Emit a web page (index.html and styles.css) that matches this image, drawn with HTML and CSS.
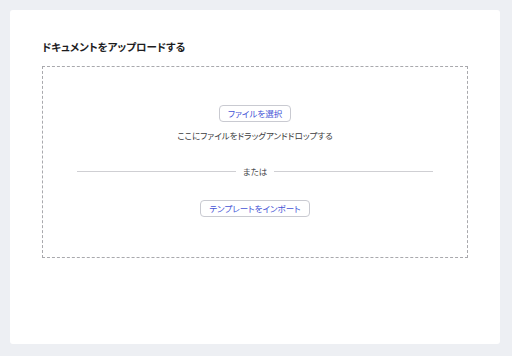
FILE: index.html
```html
<!DOCTYPE html>
<html lang="ja">
<head>
<meta charset="UTF-8">
<meta name="viewport" content="width=device-width, initial-scale=1.0">
<title>ドキュメントをアップロード</title>
<link rel="stylesheet" href="styles.css">
</head>
<body>
<div class="upload-card">
  <h2 class="upload-title">ドキュメントをアップロードする</h2>
  <div class="drop-zone">
    <button class="pick-button">ファイルを選択</button>
    <p class="drop-hint">ここにファイルをドラッグアンドドロップする</p>
    <div class="divider">
      <span class="divider-line"></span>
      <span class="divider-text">または</span>
      <span class="divider-line"></span>
    </div>
    <button class="pick-button">テンプレートをインポート</button>
  </div>
</div>
</body>
</html>
```

FILE: styles.css
```css
* {
  box-sizing: border-box;
}
body {
  font-family: "Noto Sans CJK JP", "Noto Sans", sans-serif;
  font-feature-settings: "palt";
  background-color: #edeff3;
  margin: 0;
  height: 100vh;
  padding: 10px 12px 12px 10px;
  display: flex;
}
.upload-card {
  flex: 1;
  background-color: white;
  border-radius: 3px;
  padding: 30px 32px;
}
.upload-title {
  margin: 0 0 12px;
  font-size: 10.5px;
  line-height: 14px;
  font-weight: bold;
  color: #1d1d1f;
}
.drop-zone {
  border: 1px dashed #a9a9ad;
  padding: 38px 34px 40px;
  display: flex;
  flex-direction: column;
  align-items: center;
}
.pick-button {
  font-family: inherit;
  font-feature-settings: "palt";
  font-size: 8.5px;
  line-height: 11px;
  padding: 2px 8px;
  color: #4453d6;
  background-color: white;
  border: 1px solid #c9cad1;
  border-radius: 4px;
  cursor: pointer;
}
.drop-hint {
  margin: 7px 0 0;
  font-size: 8.5px;
  line-height: 12px;
  color: #3c3c40;
}
.divider {
  align-self: stretch;
  display: flex;
  align-items: center;
  gap: 7px;
  margin: 24px 0 23px;
}
.divider-line {
  flex: 1;
  height: 1px;
  background-color: #cfcfd3;
}
.divider-text {
  font-size: 8.5px;
  line-height: 12px;
  color: #4a4a4e;
}
```
